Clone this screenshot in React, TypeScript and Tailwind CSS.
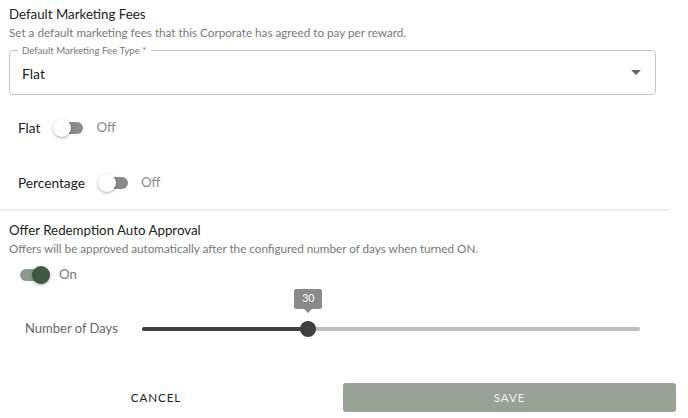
import { useState } from 'react'

function Switch({ on }: { on: boolean }) {
  return (
    <div className="relative w-[32px] h-[18px] flex items-center">
      <div className={`w-[28px] h-[12px] rounded-full ml-[2px] ${on ? 'bg-[#8c9c8c]' : 'bg-[#8a8a8a]'}`} />
      <div
        className={`absolute top-0 w-[18px] h-[18px] rounded-full shadow-[0_1px_3px_rgba(0,0,0,0.35)] ${
          on ? 'left-[14px] bg-[#3e5a40]' : 'left-0 bg-white'
        }`}
      />
    </div>
  )
}

export default function App() {
  const [days] = useState(30)
  const pct = 33.4

  return (
    <div className="w-[688px] h-[418px] bg-white text-[#222] font-['Lato','Open_Sans',sans-serif] overflow-hidden">
      {/* Default marketing fees */}
      <div className="pl-[9px] pr-[32px] pt-[5px]">
        <h2 className="text-[13.3px] leading-[18px]">Default Marketing Fees</h2>
        <p className="text-[11.7px] leading-[16px] text-[#777] mt-[1px]">
          Set a default marketing fees that this Corporate has agreed to pay per reward.
        </p>

        <div className="relative mt-[10px] h-[45px] border border-[#c4c4c4] rounded-[4px] flex items-center px-[12px]">
          <span className="absolute -top-[8px] left-[8px] bg-white px-[4px] text-[9.7px] leading-[14px] text-[#777]">
            Default Marketing Fee Type *
          </span>
          <span className="flex-1 text-[14px] mt-[1px]">Flat</span>
          <svg width="10" height="5" viewBox="0 0 10 5" className="mr-[2px]">
            <path d="M0 0h10L5 5z" fill="#666" />
          </svg>
        </div>
      </div>

      <div className="pl-[18px] mt-[23px] flex items-center h-[20px]">
        <span className="text-[13.7px] mr-[13px]">Flat</span>
        <Switch on={false} />
        <span className="text-[13.3px] text-[#888] ml-[11px]">Off</span>
      </div>

      <div className="pl-[18px] mt-[35px] flex items-center h-[20px]">
        <span className="text-[13.7px] mr-[13px]">Percentage</span>
        <Switch on={false} />
        <span className="text-[13.3px] text-[#888] ml-[11px]">Off</span>
      </div>

      <div className="mt-[16px] h-[2px] w-[670px] bg-[#f0f0f0]" />

      {/* Auto approval */}
      <div className="pl-[9px] mt-[10px]">
        <h2 className="text-[13.3px] leading-[18px]">Offer Redemption Auto Approval</h2>
        <p className="text-[11.7px] leading-[16px] text-[#777] mt-[1px]">
          Offers will be approved automatically after the configured number of days when turned ON.
        </p>
      </div>

      <div className="pl-[18px] mt-[9px] flex items-center gap-[9px] h-[20px]">
        <Switch on={true} />
        <span className="text-[13.3px] text-[#777]">On</span>
      </div>

      <div className="pl-[25px] mt-[34px] flex items-center h-[20px]">
        <span className="text-[13px] text-[#666] w-[117px]">Number of Days</span>
        <div className="relative w-[498px] h-[4px] rounded-full bg-[#bdbdbd]">
          <div className="absolute left-0 top-0 h-[4px] rounded-full bg-[#404040]" style={{ width: `${pct}%` }} />
          <div
            className="absolute top-1/2 w-[16px] h-[16px] -ml-[8px] -mt-[8px] rounded-full bg-[#404040]"
            style={{ left: `${pct}%` }}
          />
          <div
            className="absolute -top-[38px] -ml-[14px] w-[28px] h-[20px] rounded-[2px] bg-[#8a8a8a] text-white text-[10.5px] flex items-center justify-center"
            style={{ left: `${pct}%` }}
          >
            {days}
            <div className="absolute -bottom-[4px] left-1/2 -ml-[4px] w-0 h-0 border-l-[4px] border-r-[4px] border-t-[4px] border-l-transparent border-r-transparent border-t-[#8a8a8a]" />
          </div>
        </div>
      </div>

      <div className="mt-[44px] flex items-center pr-[12px]">
        <button className="w-[312px] h-[29px] text-[11.6px] tracking-[0.08em] text-[#222]">CANCEL</button>
        <button className="ml-[31px] flex-1 h-[29px] rounded-[3px] bg-[#98a395] text-[11.6px] tracking-[0.08em] text-[#eef0ec]">
          SAVE
        </button>
      </div>
    </div>
  )
}
